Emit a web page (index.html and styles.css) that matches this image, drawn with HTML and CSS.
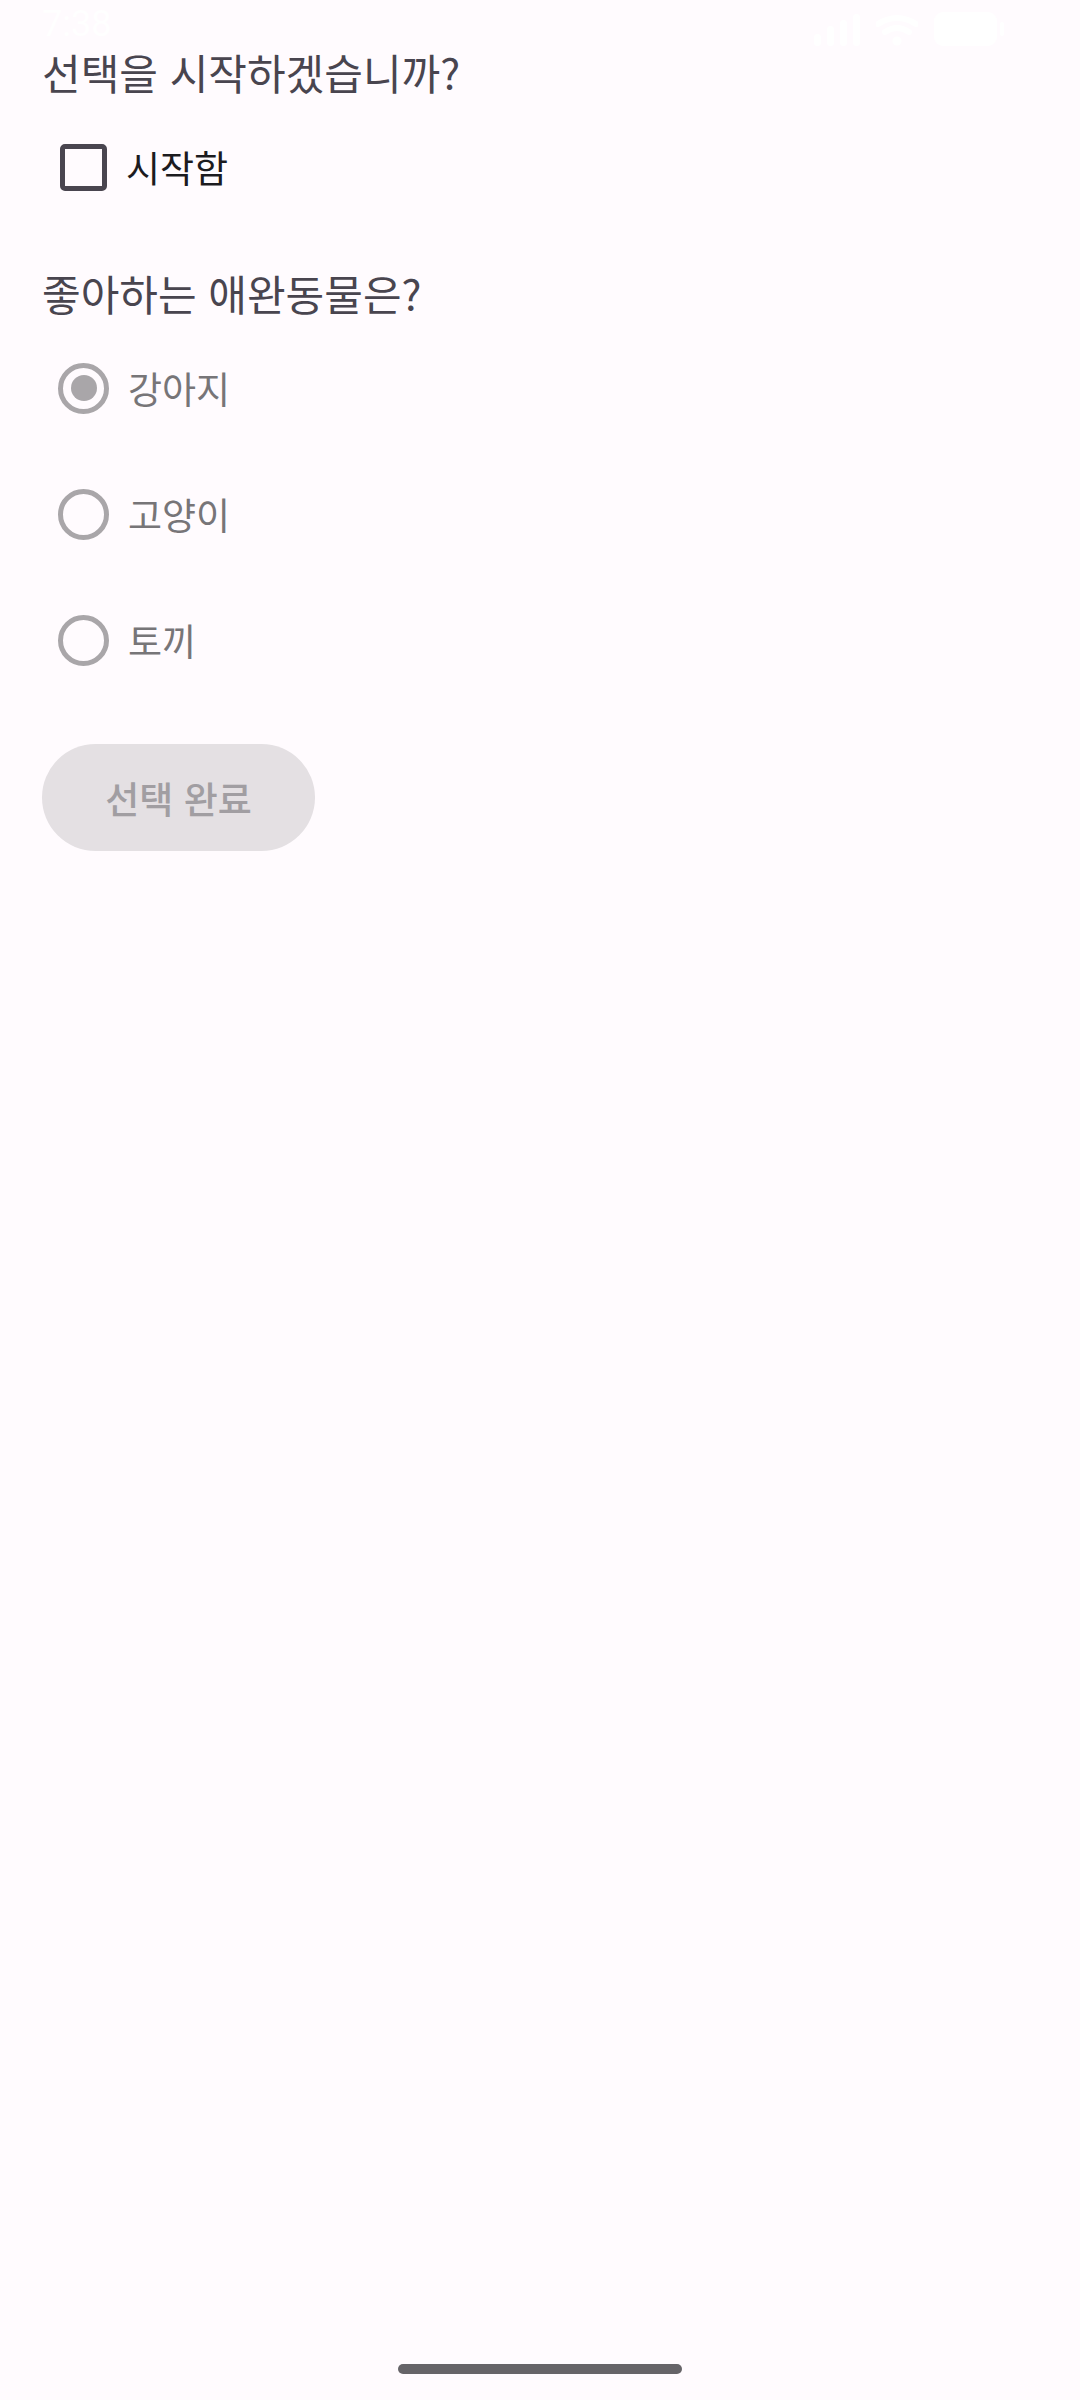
FILE: index.html
```html
<!DOCTYPE html>
<html lang="ko">
<head>
<meta charset="utf-8">
<title>선택</title>
<link rel="stylesheet" href="styles.css">
</head>
<body>
<div class="screen">
  <div class="status-bar">
    <span class="time">7:38</span>
    <div class="status-icons">
      <svg class="ic-signal" width="46" height="32" viewBox="0 0 46 32">
        <rect x="0" y="20" width="7" height="12" rx="3.5" fill="#fff"/>
        <rect x="13" y="12" width="7" height="20" rx="3.5" fill="#fff"/>
        <rect x="26" y="6" width="7" height="26" rx="3.5" fill="#fff"/>
        <rect x="39" y="0" width="7" height="32" rx="3.5" fill="#fff"/>
      </svg>
      <svg class="ic-wifi" width="42" height="32" viewBox="0 0 42 32">
        <path d="M2 10 Q21 -2 40 10" stroke="#fff" stroke-width="6" fill="none" stroke-linecap="round"/>
        <path d="M9 18 Q21 10 33 18" stroke="#fff" stroke-width="6" fill="none" stroke-linecap="round"/>
        <circle cx="21" cy="27" r="4.5" fill="#fff"/>
      </svg>
      <svg class="ic-battery" width="72" height="36" viewBox="0 0 72 36">
        <rect x="0" y="0" width="63" height="34" rx="9" fill="#fff"/>
        <rect x="66" y="10" width="4" height="14" rx="2" fill="#fff"/>
      </svg>
    </div>
  </div>

  <main class="content">
    <h2 class="question">선택을 시작하겠습니까?</h2>
    <label class="check-row">
      <span class="checkbox"></span>
      <span class="check-label">시작함</span>
    </label>

    <h2 class="question question-pets">좋아하는 애완동물은?</h2>
    <div class="radio-group">
      <div class="radio-row">
        <span class="radio selected"><span class="radio-dot"></span></span>
        <span class="radio-label">강아지</span>
      </div>
      <div class="radio-row">
        <span class="radio"></span>
        <span class="radio-label">고양이</span>
      </div>
      <div class="radio-row">
        <span class="radio"></span>
        <span class="radio-label">토끼</span>
      </div>
    </div>

    <button class="done-btn" disabled>선택 완료</button>
  </main>

  <div class="home-indicator"></div>
</div>
</body>
</html>
```
FILE: styles.css
```css
html, body {
  margin: 0;
  padding: 0;
  background: #FFFBFE;
}

body {
  font-family: "Noto Sans CJK KR", "Noto Sans", sans-serif;
  width: 1080px;
  height: 2400px;
  overflow: hidden;
}

.screen {
  position: relative;
  width: 1080px;
  height: 2400px;
  background: #FFFBFE;
}

.status-bar {
  position: absolute;
  top: 0;
  left: 0;
  right: 0;
  height: 56px;
  display: flex;
  align-items: center;
  justify-content: space-between;
  padding: 0 74px 0 42px;
  box-sizing: border-box;
}

.time {
  color: #ffffff;
  font-family: Roboto, "Noto Sans", sans-serif;
  font-size: 36px;
  line-height: 36px;
  margin-top: -8px;
}

.status-icons {
  display: flex;
  align-items: center;
  gap: 16px;
  margin-top: 4px;
}

.content {
  display: flex;
  flex-direction: column;
  align-items: flex-start;
  padding: 41px 42px 0 42px;
}

.question {
  margin: 0;
  padding: 7px 0 8px 0;
  font-size: 42px;
  font-weight: 400;
  line-height: 48px;
  color: #49454F;
}

.question-pets {
  margin-top: 32px;
}

.check-row {
  display: flex;
  align-items: center;
  height: 126px;
  padding-left: 18px;
  gap: 19px;
}

.checkbox {
  width: 47px;
  height: 47px;
  box-sizing: border-box;
  border: 5px solid #49454F;
  border-radius: 5px;
}

.check-label {
  font-size: 37px;
  line-height: 50px;
  color: #1C1B1F;
}

.radio-group {
  display: flex;
  flex-direction: column;
}

.radio-row {
  display: flex;
  align-items: center;
  height: 126px;
  padding-left: 16px;
  gap: 19px;
}

.radio {
  width: 51px;
  height: 51px;
  box-sizing: border-box;
  border: 5px solid #A9A6A9;
  border-radius: 50%;
  display: flex;
  align-items: center;
  justify-content: center;
}

.radio-dot {
  width: 26px;
  height: 26px;
  border-radius: 50%;
  background: #A9A6A9;
}

.radio-label {
  font-size: 37px;
  line-height: 50px;
  color: #777578;
}

.done-btn {
  margin-top: 41px;
  width: 273px;
  height: 107px;
  border: none;
  border-radius: 54px;
  background: #E4E0E3;
  color: #A19EA2;
  font-family: "Noto Sans CJK KR", "Noto Sans", sans-serif;
  font-size: 37px;
  font-weight: 500;
  padding: 0;
  display: flex;
  align-items: center;
  justify-content: center;
}

.home-indicator {
  position: absolute;
  left: 398px;
  top: 2364px;
  width: 284px;
  height: 10px;
  border-radius: 5px;
  background: #666468;
}
```
